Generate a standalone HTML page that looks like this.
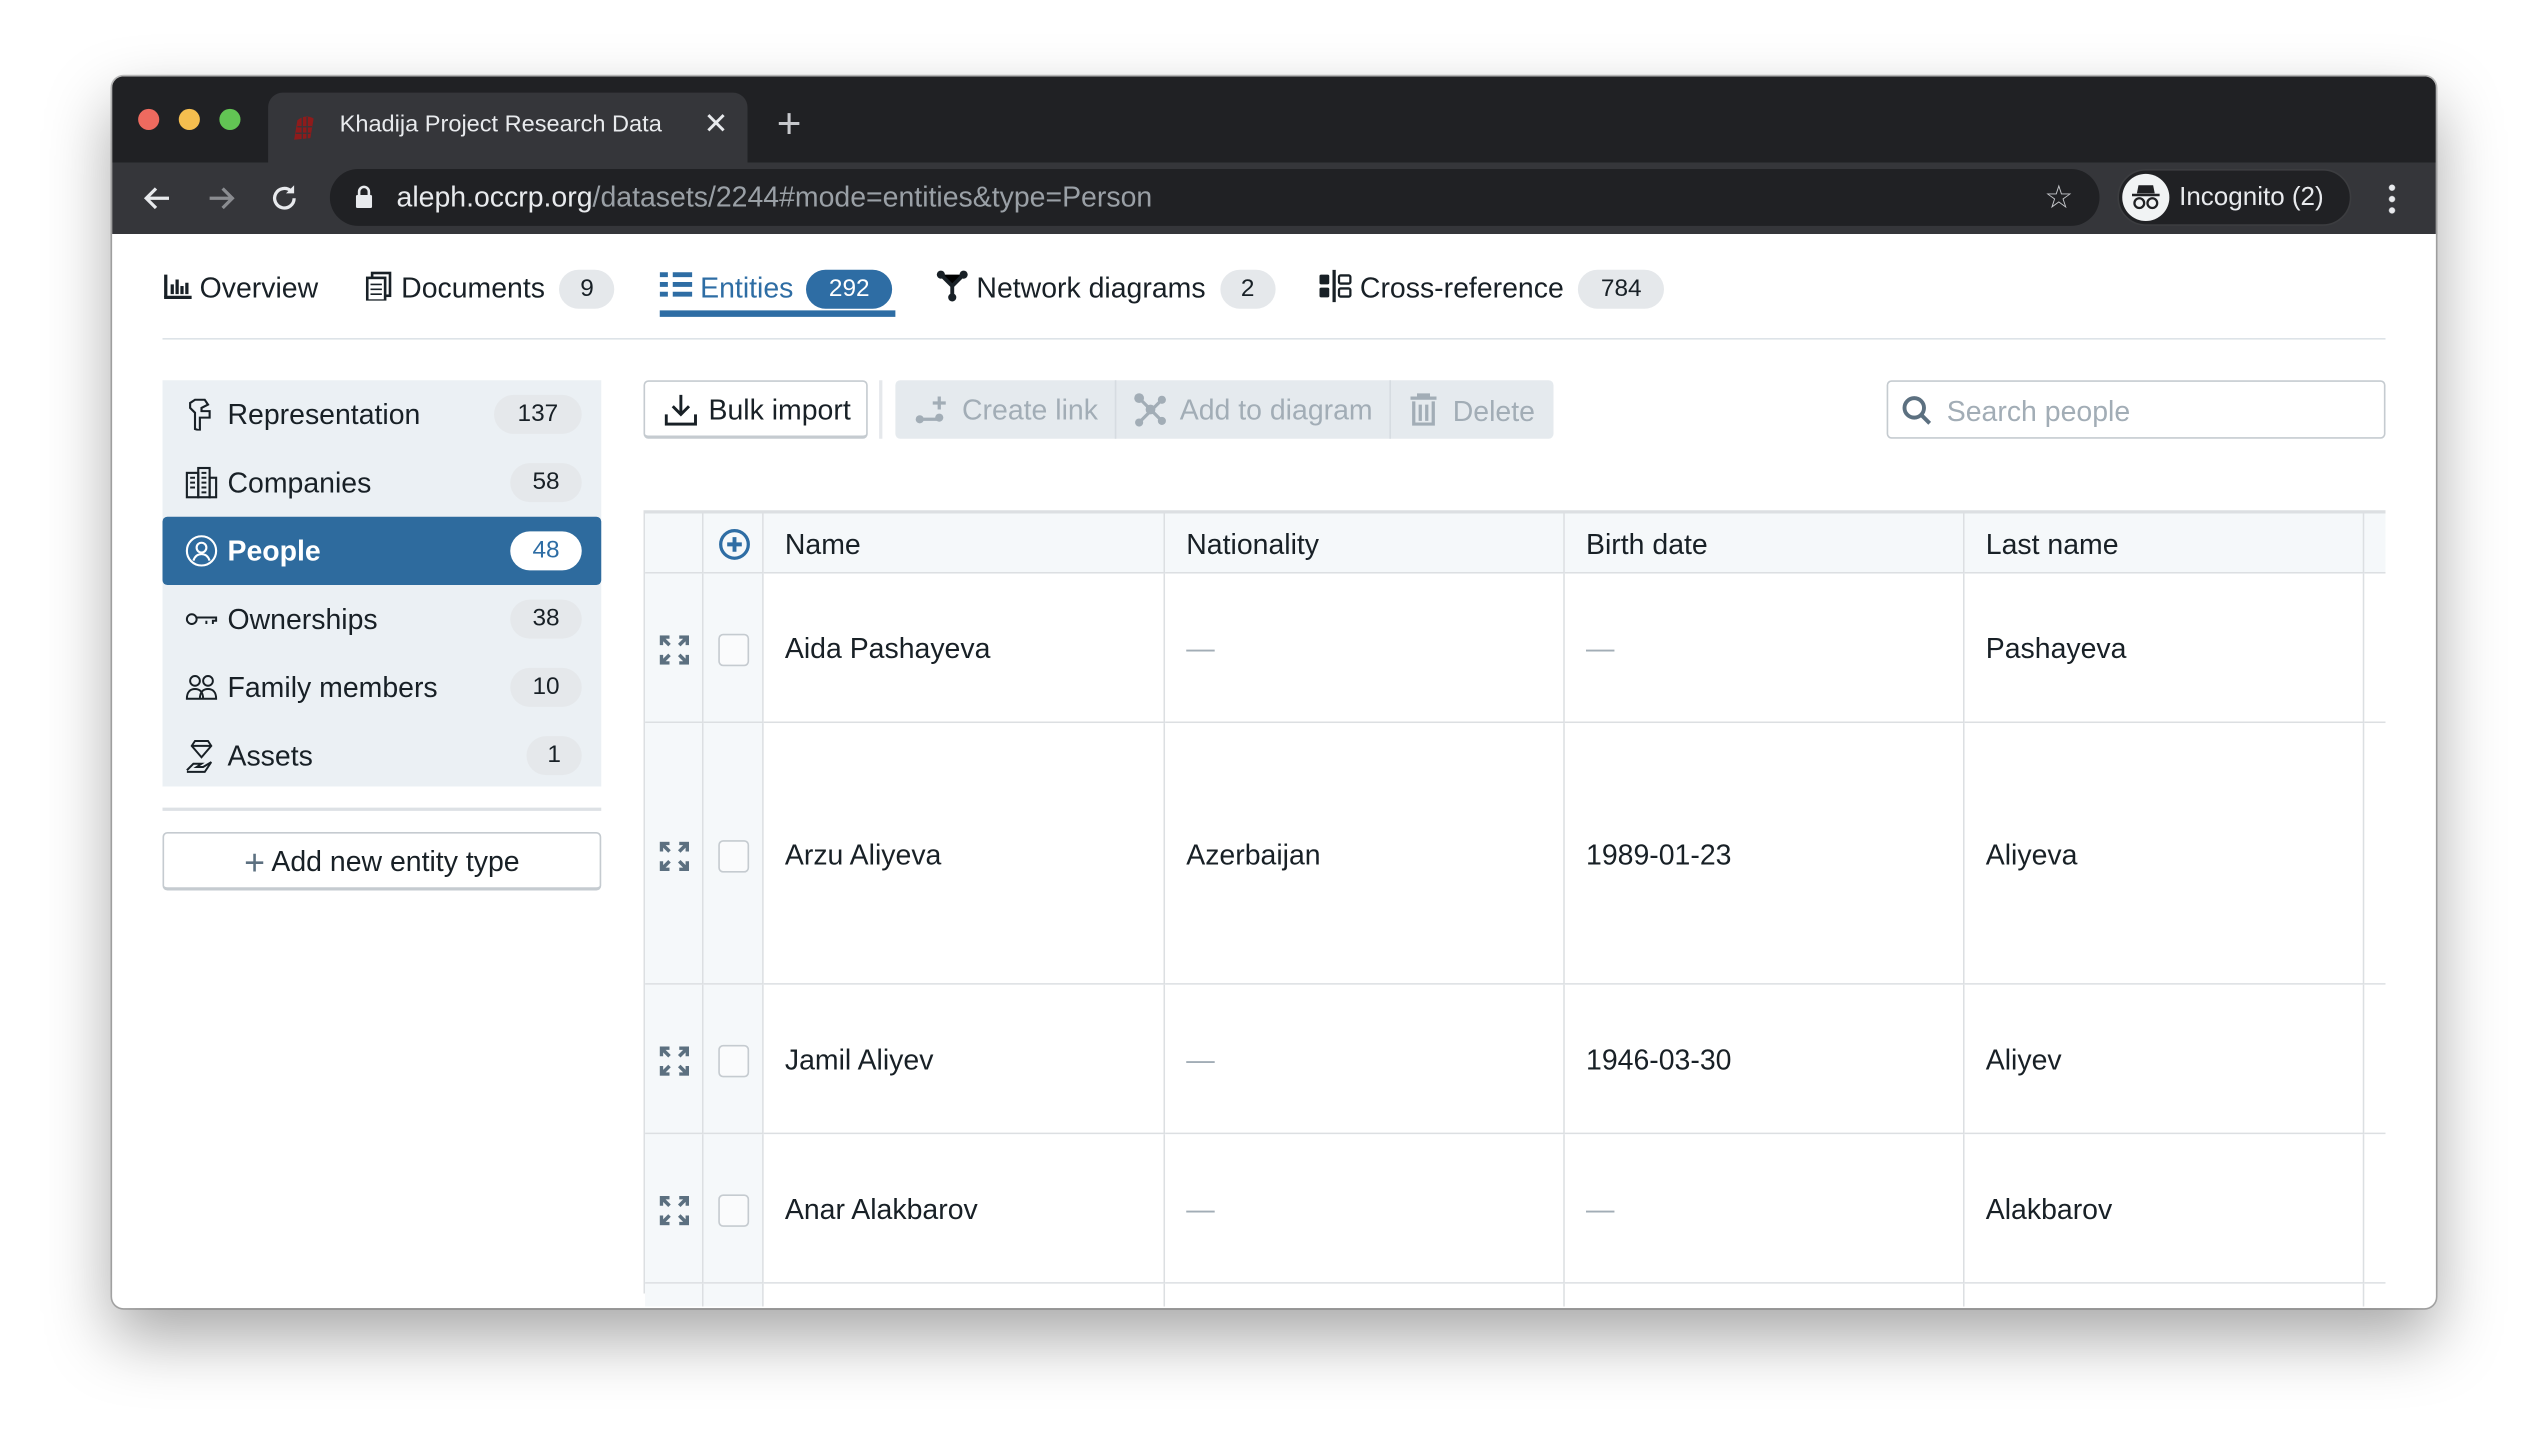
<!DOCTYPE html>
<html><head><meta charset="utf-8"><style>
*{box-sizing:border-box;margin:0;padding:0}
html,body{width:2548px;height:1456px;overflow:hidden;background:#fff;font-family:"Liberation Sans",sans-serif}
#s{position:absolute;left:0;top:0;width:1568px;height:896px;transform:scale(1.625);transform-origin:0 0}
.a{position:absolute}
.win{left:69px;top:47px;width:1430px;height:758px;border-radius:7px;overflow:hidden;background:#fff;box-shadow:0 18px 40px rgba(0,0,0,.35),0 0 0 1px rgba(0,0,0,.25)}
.tabbar{left:0;top:0;width:1430px;height:53px;background:#202124}
.dot{width:13px;height:13px;border-radius:50%;top:20px}
.tab{left:96px;top:10px;width:295px;height:43px;background:#35363a;border-radius:9px 9px 0 0;color:#e8eaed;font-size:14.5px}
.tool{left:0;top:53px;width:1430px;height:44px;background:#35363a}
.addr{left:134px;top:4px;width:1089px;height:35px;border-radius:18px;background:#202124;font-size:17.5px;color:#e8eaed}
.inc{left:1234px;top:4px;width:144px;height:35px;border-radius:18px;background:#202124;border:1px solid #3c3d40;color:#e8eaed;font-size:16px}
.t{font-size:17.5px;color:#182026;white-space:nowrap;height:26px;line-height:26px}
.t svg{vertical-align:middle;position:relative;top:-2px}
.badge{display:inline-block;border-radius:12px;background:#e5e8eb;color:#182026;font-size:15px;text-align:center;height:24px;line-height:24px;vertical-align:middle}
.side{left:100px;top:234px;width:270px;height:250px;background:#ebf0f4}
.si{position:absolute;left:0;width:270px;height:42px;font-size:17.5px;color:#182026}
.si span.l{position:absolute;left:40px;top:11px}
.si .badge{position:absolute;right:12px;top:9px}
.btn{font-size:17.5px;height:36px;line-height:34px}
.cell{position:absolute;border-right:1px solid #dcdfe2;border-bottom:1px solid #dcdfe2}
.ct{position:absolute;font-size:17.5px;color:#182026;white-space:nowrap}
</style></head><body><div id="s">
<div class="a win">
 <div class="a tabbar">
  <div class="a dot" style="left:16px;background:#ee6a5f"></div>
  <div class="a dot" style="left:41px;background:#f5be4f"></div>
  <div class="a dot" style="left:66px;background:#62c554"></div>
  <div class="a tab"><svg class="a" style="left:14px;top:13px" width="16" height="18" viewBox="0 0 16 18"><path d="M2 16 L4 4 Q9 0 14 3 L12 15 Z" fill="#8e1b1b"/><path d="M4 8h9M3 12h9M7 2v14M10 2v14" stroke="#35363a" stroke-width=".8"/></svg><span class="a" style="left:44px;top:12px">Khadija Project Research Data</span><span class="a" style="left:268px;top:9px;font-size:18px">✕</span></div>
  <span class="a" style="left:409px;top:16px;color:#c6c8cc;font-size:26px;line-height:26px">+</span>
 </div>
 <div class="a tool">
  <svg class="a" style="left:18px;top:12px" width="20" height="20" viewBox="0 0 20 20"><path d="M17 10H3M9 4l-6 6 6 6" stroke="#e8eaed" stroke-width="2" fill="none"/></svg>
  <svg class="a" style="left:57px;top:12px" width="20" height="20" viewBox="0 0 20 20"><path d="M3 10h14M11 4l6 6-6 6" stroke="#8a8c90" stroke-width="2" fill="none"/></svg>
  <svg class="a" style="left:96px;top:12px" width="20" height="20" viewBox="0 0 20 20"><path d="M16 10a6 6 0 1 1-2-4.5" stroke="#e8eaed" stroke-width="2" fill="none"/><path d="M16 2v5h-5z" fill="#e8eaed"/></svg>
  <div class="a addr"><svg class="a" style="left:16px;top:10px" width="10" height="14" viewBox="0 0 10 14"><rect x="0" y="6" width="10" height="8" rx="1" fill="#e8eaed"/><path d="M2 6V4a3 3 0 0 1 6 0v2" stroke="#e8eaed" stroke-width="1.6" fill="none"/></svg><span class="a" style="left:41px;top:7px">aleph.occrp.org<span style="color:#9aa0a6">/datasets/2244#mode=entities&amp;type=Person</span></span><span class="a" style="left:1055px;top:5px;color:#c6c8cc;font-size:20px">☆</span></div>
  <div class="a inc"><div class="a" style="left:2px;top:2px;width:29px;height:29px;border-radius:50%;background:#f1f3f4"><svg class="a" style="left:4px;top:5px" width="21" height="18" viewBox="0 0 21 18"><path d="M6 2h9l1 5H5z" fill="#202124"/><path d="M2 8h17" stroke="#202124" stroke-width="1.5"/><circle cx="6.5" cy="13" r="3" stroke="#202124" stroke-width="1.4" fill="none"/><circle cx="14.5" cy="13" r="3" stroke="#202124" stroke-width="1.4" fill="none"/></svg></div><span class="a" style="left:37px;top:8px">Incognito (2)</span></div>
  <div class="a" style="left:1401px;top:12px;width:4px;height:20px;background:radial-gradient(circle,#e8eaed 1.8px,transparent 2px) 0 0/4px 7px"></div>
 </div>
</div>
<div class="a t" style="left:100px;top:164px"><svg width="18" height="18" viewBox="0 0 18 18"><path d="M2 2v14M6 8v6M9 5v9M12 9v5M15 7v7" stroke="#182026" stroke-width="2"/><path d="M1 16h17" stroke="#182026" stroke-width="2"/></svg> Overview</div>
<div class="a t" style="left:225px;top:164px"><svg width="17" height="18" viewBox="0 0 17 18"><rect x="4" y="1" width="11" height="14" fill="none" stroke="#182026" stroke-width="1.6"/><rect x="1" y="4" width="11" height="14" fill="#fff" stroke="#182026" stroke-width="1.6"/><path d="M3 8h7M3 11h7M3 14h7" stroke="#182026"/></svg> Documents <span class="badge" style="width:34px;margin-left:4px">9</span></div>
<div class="a t" style="left:406px;top:164px;color:#2e6da4"><svg width="20" height="18" viewBox="0 0 20 18"><path d="M0 2h5M8 2h12M0 8h5M8 8h12M0 14h5M8 14h12" stroke="#2e6da4" stroke-width="3"/></svg> Entities <span class="badge" style="width:53px;background:#2e6da4;color:#fff;margin-left:3px">292</span></div>
<div class="a" style="left:406px;top:191px;width:145px;height:4px;background:#2e6da4"></div>
<div class="a t" style="left:576px;top:164px"><svg width="20" height="20" viewBox="0 0 20 20"><path d="M3 3l7 7 7-7M10 10v7" stroke="#182026" stroke-width="2.4"/><circle cx="3" cy="3" r="2.5" fill="#182026"/><circle cx="17" cy="3" r="2.5" fill="#182026"/><circle cx="10" cy="17" r="2.5" fill="#182026"/></svg> Network diagrams <span class="badge" style="width:34px;margin-left:4px">2</span></div>
<div class="a t" style="left:812px;top:164px"><svg width="20" height="20" viewBox="0 0 20 20"><rect x="0" y="3" width="6" height="6" rx="1" fill="#182026"/><rect x="0" y="11" width="6" height="6" rx="1" fill="#182026"/><path d="M9 0v20" stroke="#182026" stroke-width="2"/><rect x="12" y="3.5" width="7" height="5" rx="1" fill="none" stroke="#182026" stroke-width="1.4"/><rect x="12" y="11.5" width="7" height="5" rx="1" fill="none" stroke="#182026" stroke-width="1.4"/></svg> Cross-reference <span class="badge" style="width:53px;margin-left:4px">784</span></div>
<div class="a" style="left:100px;top:208px;width:1368px;height:1px;background:#dde3e8"></div>

<div class="a side">
 <div class="si" style="top:0"><svg class="a" style="left:14px;top:11px" width="20" height="20" viewBox="0 0 20 20" fill="none" stroke="#182026" stroke-width="1.3"><path d="M6 19V9L3 6V3l3-2h6l2 3-4 2v2h5v4H9v8z"/></svg><span class="l">Representation</span><span class="badge" style="width:54px">137</span></div>
 <div class="si" style="top:42px"><svg class="a" style="left:14px;top:11px" width="20" height="20" viewBox="0 0 20 20" fill="none" stroke="#182026" stroke-width="1.3"><rect x="1" y="4" width="7" height="15"/><rect x="8" y="1" width="7" height="18"/><rect x="15" y="7" width="4" height="12"/><path d="M3 7h3M3 10h3M3 13h3M10 4h3M10 7h3M10 10h3M10 13h3M10 16h3" stroke-width="1.2"/></svg><span class="l">Companies</span><span class="badge" style="width:44px">58</span></div>
 <div class="si" style="top:84px;background:#2e6b9e;color:#fff;border-radius:3px"><svg class="a" style="left:14px;top:11px" width="20" height="20" viewBox="0 0 20 20" fill="none" stroke="#fff" stroke-width="1.3"><circle cx="10" cy="10" r="9"/><circle cx="10" cy="8" r="3"/><path d="M5 16c1-3 3-4 5-4s4 1 5 4"/></svg><span class="l" style="font-weight:bold">People</span><span class="badge" style="width:44px;background:#fff;color:#2e6da4">48</span></div>
 <div class="si" style="top:126px"><svg class="a" style="left:14px;top:11px" width="20" height="20" viewBox="0 0 20 20" fill="none" stroke="#182026" stroke-width="1.2"><circle cx="4" cy="10" r="3"/><path d="M7 9h12v2h-2v2M13 11v2"/></svg><span class="l">Ownerships</span><span class="badge" style="width:44px">38</span></div>
 <div class="si" style="top:168px"><svg class="a" style="left:14px;top:11px" width="20" height="20" viewBox="0 0 20 20" fill="none" stroke="#182026" stroke-width="1.2"><circle cx="6" cy="6" r="3"/><circle cx="14" cy="6" r="3"/><path d="M1 17c0-4 2-6 5-6s5 2 5 6zM9 17c0-4 2-6 5-6s5 2 5 6z"/></svg><span class="l">Family members</span><span class="badge" style="width:44px">10</span></div>
 <div class="si" style="top:210px"><svg class="a" style="left:14px;top:10px" width="20" height="22" viewBox="0 0 20 22" fill="none" stroke="#182026" stroke-width="1.2"><path d="M6 2h8l2 3-6 7-6-7zM4 5h12"/><path d="M1 20l4-4h5l-3 2h4l5-3-4 6H1"/></svg><span class="l">Assets</span><span class="badge" style="width:34px">1</span></div>
</div>
<div class="a" style="left:100px;top:497px;width:270px;height:2px;background:#dde1e5"></div>
<div class="a btn" style="left:100px;top:512px;width:270px;border:1px solid #c5cbd0;border-bottom-width:2px;border-radius:3px;background:#fff;text-align:center;color:#182026"><span style="font-size:22px;color:#5c7080;vertical-align:-2px">+</span> Add new entity type</div>

<div class="a btn" style="left:396px;top:234px;width:138px;border:1px solid #c5cbd0;border-bottom-width:2px;border-radius:3px;background:#fff;color:#182026"><svg class="a" style="left:12px;top:7px" width="20" height="20" viewBox="0 0 20 20" fill="none" stroke="#182026" stroke-width="1.8"><path d="M10 1v12M5 8l5 5 5-5M1 13v6h18v-6"/></svg><span class="a" style="left:39px;top:0">Bulk import</span></div>
<div class="a" style="left:541px;top:234px;width:2px;height:36px;background:#e5e8eb"></div>
<div class="a btn" style="left:551px;top:234px;width:405px;background:#e5eaee;border-radius:3px;color:#a2adb6">
 <svg class="a" style="left:12px;top:8px" width="20" height="20" viewBox="0 0 20 20"><circle cx="3" cy="16" r="2.5" fill="#a2adb6"/><circle cx="15" cy="15" r="2.5" fill="#a2adb6"/><path d="M3 16h12M15 2v8M11 6h8" stroke="#a2adb6" stroke-width="2"/></svg><span class="a" style="left:41px;top:1px">Create link</span>
 <div class="a" style="left:135px;top:0;width:1px;height:36px;background:#d6dce1"></div>
 <svg class="a" style="left:146px;top:7px" width="22" height="22" viewBox="0 0 22 22" fill="#a2adb6"><circle cx="4" cy="4" r="3"/><circle cx="18" cy="5" r="2.5"/><circle cx="11" cy="11" r="3"/><circle cx="4" cy="19" r="2.5"/><circle cx="18" cy="18" r="2.5"/><path d="M4 4l14 14M18 5L4 19" stroke="#a2adb6" stroke-width="2"/></svg><span class="a" style="left:175px;top:1px">Add to diagram</span>
 <div class="a" style="left:304px;top:0;width:1px;height:36px;background:#d6dce1"></div>
 <svg class="a" style="left:316px;top:8px" width="18" height="20" viewBox="0 0 18 20" fill="none" stroke="#a2adb6" stroke-width="2"><path d="M1 3h16M6 3V1h6v2M3 5v14h12V5M7 7v10M11 7v10"/></svg><span class="a" style="left:343px;top:2px">Delete</span>
</div>
<div class="a" style="left:1161px;top:234px;width:307px;height:36px;border:1px solid #c5cbd0;border-radius:3px;background:#fff"><svg class="a" style="left:8px;top:8px" width="20" height="20" viewBox="0 0 20 20" fill="none" stroke="#5c7080" stroke-width="2.4"><circle cx="8" cy="8" r="6"/><path d="M12.5 12.5l5 5"/></svg><span class="a" style="left:36px;top:8px;font-size:17.5px;color:#a2adb6">Search people</span></div>

<div class="a" style="left:0;top:0;width:1568px;height:804px;overflow:hidden">
<div class="a" style="left:396px;top:314px;width:1072px;height:2px;background:#dcdfe2"></div>
<div class="a" style="left:396px;top:316px;width:1px;height:480px;background:#dcdfe2"></div>
<div id="tb"></div>
</div>
<script>
var cols=[[397,36],[433,37],[470,247],[717,246],[963,246],[1209,246],[1455,13]];
var rows=[[316,37],[353,92],[445,161],[606,92],[698,92],[790,20]];
var data=[["Name","Nationality","Birth date","Last name"],["Aida Pashayeva","—","—","Pashayeva"],["Arzu Aliyeva","Azerbaijan","1989-01-23","Aliyeva"],["Jamil Aliyev","—","1946-03-30","Aliyev"],["Anar Alakbarov","—","—","Alakbarov"],["","","",""]];
var h="";
rows.forEach(function(r,ri){cols.forEach(function(c,ci){
 var bg=(ri==0||ci<2)?"#f5f8fa":"#fff";
 var br=ci==6?"border-right:none;":"";
 h+='<div class="cell" style="left:'+c[0]+'px;top:'+r[0]+'px;width:'+c[1]+'px;height:'+r[1]+'px;background:'+bg+';'+br+'"></div>';
 var cy=r[0]+r[1]/2;
 if(ci>=2&&ci<6){var t=data[ri][ci-2];if(t){var col=t=="—"?"#a2adb6":"#182026";h+='<div class="ct" style="left:'+(c[0]+13)+'px;top:'+(cy-10)+'px;color:'+col+'">'+t+'</div>';}}
 if(ri==0&&ci==1)h+='<svg class="a" style="left:442px;top:'+(cy-10)+'px" width="20" height="20" viewBox="0 0 20 20"><circle cx="10" cy="10" r="8.5" fill="none" stroke="#2e6da4" stroke-width="2"/><path d="M10 5.5v9M5.5 10h9" stroke="#2e6da4" stroke-width="2.4"/></svg>';
 if(ri>0&&ri<5&&ci==0)h+='<svg class="a" style="left:406px;top:'+(cy-8)+'px" width="18" height="18" viewBox="0 0 18 18" fill="none" stroke="#5c7080" stroke-width="2.2"><path d="M1 6V1h5M1 1l5 5M12 1h5v5M17 1l-5 5M1 12v5h5M1 17l5-5M17 12v5h-5M17 17l-5-5"/></svg>';
 if(ri>0&&ri<5&&ci==1)h+='<div class="a" style="left:442px;top:'+(cy-9)+'px;width:19px;height:20px;border:1px solid #c5cbd0;border-radius:3px;background:#fafbfc"></div>';
});});
document.getElementById("tb").innerHTML=h;
</script>
</div></body></html>
